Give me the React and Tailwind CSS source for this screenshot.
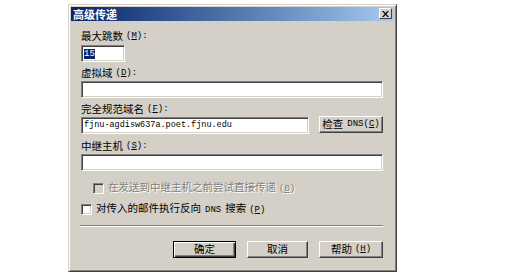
import React from "react";

const cjk = "font-['Noto_Sans_CJK_SC',sans-serif]";
const mono = "font-['Liberation_Mono','Noto_Sans_CJK_SC',monospace]";

const Key = ({ k, colon = false }) => (
  <span className={`${mono} text-[9px] ml-[3px]`}>
    (<span className="underline">{k}</span>){colon ? ":" : ""}
  </span>
);

const Label = ({ text, k }) => (
  <div className={`h-[14px] flex items-center text-[10.5px] leading-none text-black ${cjk}`}>
    <span>{text}</span>
    <Key k={k} colon />
  </div>
);

const Field = ({ className = "", children }) => (
  <div
    className={`h-[17px] bg-white border border-t-[#808080] border-l-[#808080] border-r-white border-b-white shadow-[inset_1px_1px_0_#404040,inset_-1px_-1px_0_#d4d0c8] flex items-center px-[2px] ${className}`}
  >
    {children}
  </div>
);

const Button = ({ w, isDefault = false, children }) => (
  <div
    className={`${w} h-[17px] flex items-center justify-center text-[10.5px] leading-none text-black ${cjk} ${
      isDefault
        ? "border border-black shadow-[inset_1px_1px_0_#fff,inset_-1px_-1px_0_#404040,inset_-2px_-2px_0_#808080]"
        : "border border-t-white border-l-white border-r-[#404040] border-b-[#404040] shadow-[inset_-1px_-1px_0_#808080]"
    } bg-[#d4d0c8]`}
  >
    {children}
  </div>
);

const Check = ({ disabled = false }) => (
  <div
    className={`w-[11px] h-[11px] shrink-0 border border-t-[#808080] border-l-[#808080] border-r-white border-b-white shadow-[inset_1px_1px_0_#404040,inset_-1px_-1px_0_#d4d0c8] ${
      disabled ? "bg-[#d4d0c8]" : "bg-white"
    }`}
  />
);

export default function App() {
  return (
    <div className="w-[528px] h-[278px] bg-white overflow-hidden">
      <div className="ml-[68px] mt-[4px] w-[329px] h-[268px] bg-[#d4d0c8] border border-t-[#d4d0c8] border-l-[#d4d0c8] border-r-[#404040] border-b-[#404040] shadow-[inset_1px_1px_0_#fff,inset_-1px_-1px_0_#808080] p-[2px] flex flex-col">
        <div className="h-[14px] bg-gradient-to-r from-[#0a246a] to-[#a6caf0] flex justify-between">
          <span className={`text-white font-bold text-[11px] leading-[14px] pl-[2px] ${cjk}`}>
            高级传递
          </span>
          <div className="mt-[1px] mr-[2px] w-[13px] h-[11px] bg-[#d4d0c8] border border-t-white border-l-white border-r-[#404040] border-b-[#404040] flex items-center justify-center">
            <svg width="7" height="6" viewBox="0 0 7 6">
              <path d="M0 0h1.5l2 2 2-2H7L4.3 3 7 6H5.5l-2-2-2 2H0l2.7-3z" fill="#000" />
            </svg>
          </div>
        </div>

        <div className="pl-[10px] pr-[11px] pt-[8px] flex flex-col">
          <Label text="最大跳数" k="M" />
          <Field className="mt-[2px] w-[44px]">
            <span className={`${mono} text-[9px] leading-[10px] bg-[#0a246a] text-white`}>15</span>
          </Field>

          <div className="mt-[4px]">
            <Label text="虚拟域" k="D" />
          </div>
          <Field className="mt-[1px] w-full" />

          <div className="mt-[4px]">
            <Label text="完全规范域名" k="F" />
          </div>
          <div className="mt-[1px] flex items-start">
            <Field className="w-[228px]">
              <span className={`${mono} text-[8.5px] text-black`}>fjnu-agdisw637a.poet.fjnu.edu</span>
            </Field>
            <div className="ml-[10px] -mt-[1px]">
              <Button w="w-[64px]">
                <span>检查</span>
                <span className={`${mono} text-[9px] ml-[4px]`}>
                  DNS(<span className="underline">C</span>)
                </span>
              </Button>
            </div>
          </div>

          <div className="mt-[5px]">
            <Label text="中继主机" k="S" />
          </div>
          <Field className="mt-[1px] w-full" />

          <div className="mt-[10px] h-[14px] pl-[12px] flex items-center gap-[4px]">
            <Check disabled />
            <span className={`text-[10.5px] leading-none text-[#808080] [text-shadow:1px_1px_0_#fff] ${cjk}`}>
              在发送到中继主机之前尝试直接传递
              <span className={`${mono} text-[9px] ml-[3px]`}>
                (<span className="underline">B</span>)
              </span>
            </span>
          </div>

          <div className="mt-[7px] h-[14px] flex items-center gap-[4px]">
            <Check />
            <span className={`text-[10.5px] leading-none text-black ${cjk}`}>
              对传入的邮件执行反向
              <span className={`${mono} text-[9px] mx-[4px]`}>DNS</span>
              搜索
              <Key k="P" />
            </span>
          </div>

          <div className="mt-[9px] -ml-[1px] h-[2px] border-t border-t-[#808080] border-b border-b-white" />

          <div className="mt-[14px] flex justify-end">
            <Button w="w-[63px]" isDefault>
              确定
            </Button>
            <div className="ml-[11px]">
              <Button w="w-[61px]">取消</Button>
            </div>
            <div className="ml-[11px]">
              <Button w="w-[64px]">
                帮助
                <Key k="H" />
              </Button>
            </div>
          </div>
        </div>
      </div>
    </div>
  );
}
